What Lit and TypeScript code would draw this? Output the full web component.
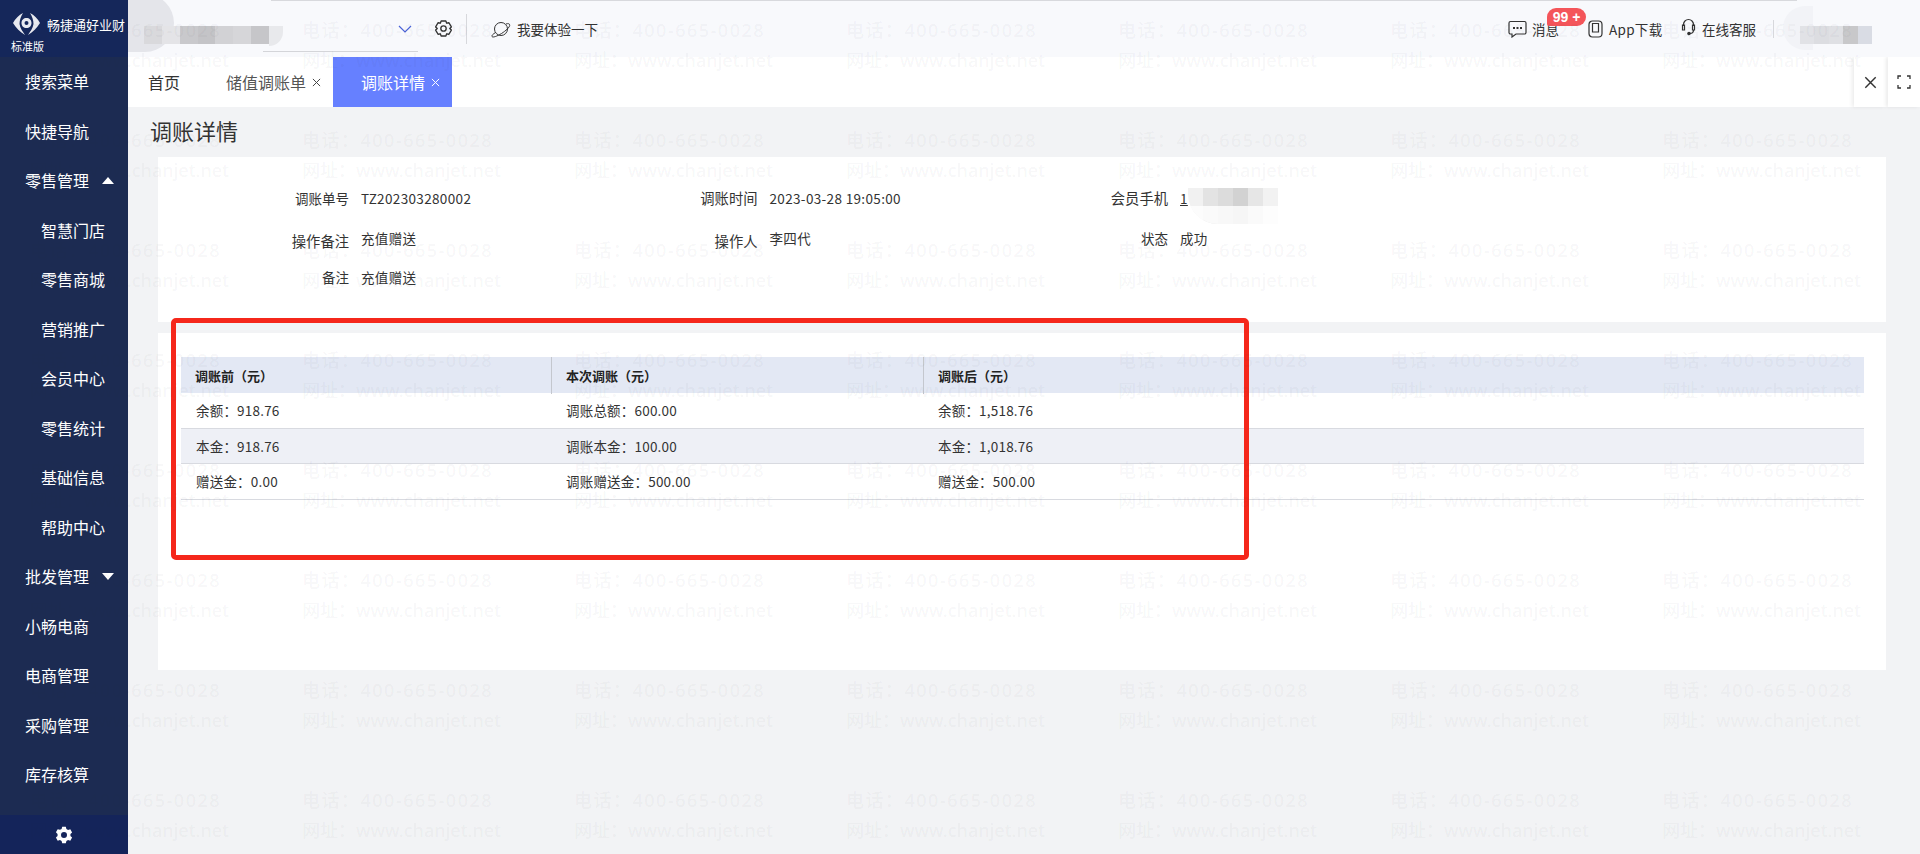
import {LitElement, html, css, svg} from 'lit';
import {customElement} from 'lit/decorators.js';

const menu = [
  {label: '搜索菜单'},
  {label: '快捷导航'},
  {label: '零售管理', arrow: 'up'},
  {label: '智慧门店', sub: true},
  {label: '零售商城', sub: true},
  {label: '营销推广', sub: true},
  {label: '会员中心', sub: true},
  {label: '零售统计', sub: true},
  {label: '基础信息', sub: true},
  {label: '帮助中心', sub: true},
  {label: '批发管理', arrow: 'down'},
  {label: '小畅电商'},
  {label: '电商管理'},
  {label: '采购管理'},
  {label: '库存核算'},
];

const fields = [
  {label: '调账单号', value: 'TZ202303280002'},
  {label: '调账时间', value: '2023-03-28 19:05:00', big: true},
  {label: '会员手机', value: '1', link: true, big: true},
  {label: '操作备注', value: '充值赠送', big: true, low: true},
  {label: '操作人', value: '李四代', big: true, low: true},
  {label: '状态', value: '成功'},
  {label: '备注', value: '充值赠送'},
];

const rows = [
  ['余额：918.76', '调账总额：600.00', '余额：1,518.76'],
  ['本金：918.76', '调账本金：100.00', '本金：1,018.76'],
  ['赠送金：0.00', '调账赠送金：500.00', '赠送金：500.00'],
];

const mosaicLeft = ['#d9d9dc', '#e4e4e7', '#c9c9cc', '#c4c4c7', '#d2d2d5', '#d6d6d9', '#c6c6c9'];
const mosaicRight = ['#e1e2e6', '#dcdde1', '#dfe0e4', '#c8c8ca', '#d9dce4'];
const mosaicPhone = ['#f1f1f1', '#e3e3e3', '#dcdcdc', '#d2d2d2', '#e6e6e6', '#f2f2f2'];

const gear = svg`<path d="M9 2.500h6l1 2.800 2.900-.6 3 5.300-2 2 2 2-3 5.300-2.900-.6-1 2.800H9l-1-2.800-2.900.6-3-5.300 2-2-2-2 3-5.300 2.900.6z" stroke-linejoin="round"/><circle cx="12" cy="12" r="3.400"/>`;

@customElement('app-root')
export class AppRoot extends LitElement {
  static styles = css`
    :host {
      display: block;
      position: relative;
      width: 100%;
      height: 854px;
      overflow: hidden;
      background: #f2f3f5;
      color: #333;
      font-family: 'Noto Sans CJK SC', 'Noto Sans', sans-serif;
      font-size: 13.5px;
    }
    .app {
      display: flex;
      height: 854px;
    }
    .side {
      width: 128px;
      flex: none;
      display: flex;
      flex-direction: column;
      background: #1c2b52;
      color: #fff;
    }
    .logo {
      height: 57px;
      flex: none;
      background: #15275a;
      box-sizing: border-box;
      padding: 13px 0 0 13px;
    }
    .logo-row {
      display: flex;
      align-items: center;
      gap: 7px;
      height: 22px;
      font-size: 13px;
      white-space: nowrap;
    }
    .edition {
      font-size: 11px;
      line-height: 14px;
      margin: 4px 0 0 -2px;
    }
    .menu {
      flex: 1;
    }
    .item {
      height: 49.5px;
      box-sizing: border-box;
      padding: 0 0 1px 25px;
      display: flex;
      align-items: center;
      font-size: 16px;
    }
    .item.sub {
      padding-left: 41px;
    }
    .tri {
      margin-left: 13px;
      width: 0;
      height: 0;
      border-left: 6px solid transparent;
      border-right: 6px solid transparent;
    }
    .tri.down {
      border-top: 7px solid #fff;
    }
    .tri.up {
      border-bottom: 7px solid #fff;
    }
    .side-foot {
      height: 39px;
      flex: none;
      background: #14245a;
      display: flex;
      align-items: center;
      justify-content: center;
    }
    .main {
      flex: 1;
      min-width: 0;
      display: flex;
      flex-direction: column;
    }
    .topbar {
      height: 57px;
      flex: none;
      display: flex;
      align-items: center;
      background: #f8f9fc;
      position: relative;
    }
    .topline {
      position: absolute;
      left: 143px;
      width: 1526px;
      top: 0;
      height: 1px;
      background: #d8d9dd;
    }
    .blob {
      position: absolute;
      left: 0;
      top: -6px;
      width: 46px;
      height: 58px;
      border-radius: 0 30px 30px 0;
      background: #e4e5ea;
    }
    .blob.tail {
      left: 141px;
      top: 26px;
      width: 14px;
      height: 20px;
      border-radius: 0 0 14px 0;
      background: #e8e9ec;
    }
    .blob.far {
      left: 1655px;
      top: 6px;
      width: 30px;
      height: 44px;
      border-radius: 22px 0 0 22px;
      background: #f2f3f7;
    }
    .underline {
      position: absolute;
      left: 135px;
      width: 155px;
      top: 51px;
      height: 1px;
      background: #d4d5d9;
    }
    .mosaic {
      display: flex;
      height: 18px;
      position: relative;
    }
    .mosaic i {
      display: block;
      flex: 1;
    }
    .account {
      margin-left: 16px;
      width: 125px;
      margin-top: 13px;
    }
    .chevron {
      margin-left: 129px;
    }
    .gear {
      margin-left: 22px;
    }
    .vline {
      width: 1px;
      background: #d7d8dc;
    }
    .vline.tall {
      height: 30px;
      margin-left: 13px;
    }
    .planet {
      margin-left: 24px;
    }
    .try {
      margin-left: 6px;
    }
    .right {
      margin-left: auto;
      display: flex;
      align-items: center;
      height: 100%;
    }
    .tool {
      display: flex;
      align-items: center;
      gap: 6px;
      position: relative;
      white-space: nowrap;
    }
    .tool.msg {
      gap: 5px;
    }
    .tool.app {
      margin-left: 29px;
    }
    .tool.help {
      margin-left: 18px;
    }
    .tool.help svg {
      margin-top: -4px;
    }
    .tool .fix {
      width: 54px;
      letter-spacing: 0.3px;
    }
    .badge {
      position: absolute;
      left: 39px;
      top: -11px;
      height: 18px;
      width: 39px;
      border-radius: 9px 9px 9px 2px;
      background: #f4555a;
      color: #fff;
      font-size: 14px;
      font-weight: 700;
      line-height: 18px;
      text-align: center;
      font-family: 'Liberation Sans', sans-serif;
    }
    .vline.short {
      height: 18px;
      margin-left: 17px;
    }
    .acc-right {
      width: 72px;
      margin-left: 26px;
      margin-right: 48px;
      margin-top: 13px;
    }
    .tabs {
      height: 50px;
      flex: none;
      display: flex;
      background: #fff;
      font-size: 16px;
      white-space: nowrap;
    }
    .tab {
      display: flex;
      align-items: center;
      gap: 6px;
    }
    .tab.home {
      margin-left: 20px;
      width: 78px;
    }
    .tab.store {
      width: 107px;
      color: #555;
    }
    .tab.on {
      width: 91px;
      padding-left: 28px;
      background: #6680ff;
      color: #fff;
    }
    .x {
      display: block;
      flex: none;
    }
    .tab-tools {
      margin-left: auto;
      display: flex;
      gap: 2px;
    }
    .tab-tools div {
      width: 32px;
      height: 50px;
      display: flex;
      align-items: center;
      justify-content: center;
      background: #fff;
      box-shadow: -2px 0 4px rgba(0, 0, 0, 0.08);
    }
    .title {
      height: 50px;
      flex: none;
      margin-left: 22px;
      font-size: 22px;
      line-height: 47px;
    }
    .card {
      background: #fff;
      margin: 0 34px 0 30px;
      flex: none;
    }
    .info {
      height: 165px;
      box-sizing: border-box;
      padding-top: 29px;
      position: relative;
      display: grid;
      grid-template-columns: 408.5px 410.5px 409px;
      grid-auto-rows: 39.5px;
    }
    .field {
      display: grid;
      grid-template-columns: 191px auto;
      column-gap: 12px;
      align-items: start;
      line-height: 24px;
    }
    .field .lab {
      text-align: right;
    }
    .field .lab.big {
      font-size: 14.3px;
    }
    .field .lab.low {
      margin-top: 3px;
    }
    .field .val {
      letter-spacing: 0.35px;
    }
    .link {
      text-decoration: underline;
    }
    .phone-blur {
      position: absolute;
      left: 1030px;
      top: 31px;
      width: 90px;
      height: 36px;
      display: flex;
      border-radius: 0 0 0 30px;
      overflow: hidden;
    }
    .phone-blur i {
      flex: 1;
    }
    .phone-blur::after {
      content: '';
      position: absolute;
      inset: 18px 0 0;
      background: rgba(255, 255, 255, 0.8);
    }
    .detail {
      margin-top: 11px;
      height: 337px;
      box-sizing: border-box;
      padding: 24px 22px 0 23px;
    }
    .thead,
    .tr {
      display: grid;
      grid-template-columns: 370px 372px 1fr;
    }
    .thead {
      height: 36px;
      background: #e3e8f4;
      font-weight: 600;
      font-size: 13px;
      color: #222;
    }
    .th {
      padding-left: 14px;
      line-height: 37px;
      border-left: 1px solid #c4c7ce;
    }
    .th:first-child {
      border-left: 0;
    }
    .tr {
      height: 35.5px;
      box-sizing: border-box;
      border-bottom: 1px solid #d8dae0;
      line-height: 34px;
    }
    .tr:nth-child(odd) {
      background: #eef0f6;
    }
    .td {
      padding-left: 15px;
      letter-spacing: 0.2px;
    }
    .mark {
      position: absolute;
      left: 171px;
      top: 318px;
      width: 1078px;
      height: 242px;
      box-sizing: border-box;
      border: 5px solid #f5271b;
      border-radius: 5px;
    }
    .water {
      position: absolute;
      inset: 0;
      padding: 15px 0 0 30px;
      overflow: hidden;
      pointer-events: none;
      display: grid;
      grid-template-columns: repeat(7, 272px);
      grid-auto-rows: 110px;
      color: rgba(50, 55, 70, 0.05);
      font-family: 'Noto Sans', 'Noto Sans CJK SC', sans-serif;
      font-size: 18px;
      font-weight: 500;
      line-height: 30px;
      white-space: nowrap;
    }
    .water .tel {
      letter-spacing: 1.5px;
    }
  `;

  icon(w: number, h: number, body: unknown, cls = '') {
    return html`<svg class=${cls} width=${w} height=${h} viewBox="0 0 ${w} ${h}" fill="none" stroke="#333" stroke-width="1.2">${body}</svg>`;
  }

  cross(size: number, color: string) {
    return html`<svg class="x" width=${size} height=${size} viewBox="0 0 10 10" fill="none" stroke=${color} stroke-width="1.1"><path d="M1 1l8 8M9 1l-8 8"/></svg>`;
  }

  mosaic(colors: string[], cls: string) {
    return html`<div class="mosaic ${cls}">${colors.map((c) => html`<i style="background:${c}"></i>`)}</div>`;
  }

  render() {
    const marks = Array.from({length: 56});
    return html`
      <div class="app">
        <aside class="side">
          <div class="logo">
            <div class="logo-row">
              <svg width="27" height="22" viewBox="0 0 27 22" fill="#e8eaf0">
                <path d="M10 0C6 2 2 6 0 10c3 5 7 9 12 12-2-3-5-7-5.500-11C6.500 7 8 3 10 0z"/>
                <path d="M17 0c4 2 8 6 10 10-3 5-7 9-12 12 2-3 5-7 5.500-11C20.500 7 19 3 17 0z"/>
                <path fill-rule="evenodd" d="M13.500 5c-2.800 0-5 2-5 5s2.200 5 5 5 5-2 5-5-2.200-5-5-5zm0 3a2 2 0 110 4 2 2 0 010-4z"/>
              </svg>
              <span>畅捷通好业财</span>
            </div>
            <div class="edition">标准版</div>
          </div>
          <div class="menu">
            ${menu.map(
              (m) => html`<div class="item ${m.sub ? 'sub' : ''}">
                ${m.label}${m.arrow ? html`<span class="tri ${m.arrow}"></span>` : ''}
              </div>`
            )}
          </div>
          <div class="side-foot">
            <svg width="18" height="18" viewBox="0 0 24 24" fill="#fff" fill-rule="evenodd">
              <path d="M9.600 1h4.800l.8 3 2.200 1.200 3-.8 2.400 4.200-2.200 2.200v2.400l2.200 2.200-2.400 4.200-3-.8-2.200 1.200-.8 3H9.600l-.8-3-2.200-1.200-3 .8-2.400-4.200 2.200-2.200v-2.400L1.200 8.400l2.400-4.200 3 .8L8.800 4zM12 8a4 4 0 100 8 4 4 0 000-8z"/>
            </svg>
          </div>
        </aside>
        <div class="main">
          <header class="topbar">
            <div class="blob"></div>
            <div class="blob tail"></div>
            <div class="blob far"></div>
            <div class="topline"></div>
            <div class="underline"></div>
            ${this.mosaic(mosaicLeft, 'account')}
            ${this.icon(14, 10, svg`<path d="M1 2l6 6 6-6" stroke="#4a63d8"/>`, 'chevron')}
            <svg class="gear" width="19" height="19" viewBox="0 0 24 24" fill="none" stroke="#333" stroke-width="1.700">${gear}</svg>
            <div class="vline tall"></div>
            ${this.icon(20, 18, svg`<circle cx="10" cy="9" r="6.500" stroke-width="1"/><path d="M4.500 12.500C2 14 .5 15.500 1 16.500c.8 1.300 5-.2 9.500-3 4.500-2.800 8-6.300 8.200-8C19 3.500 17 3.300 15 4" stroke-width="1"/>`, 'planet')}
            <span class="try">我要体验一下</span>
            <div class="right">
              <div class="tool msg">
                ${this.icon(19, 18, svg`<path d="M2.500 1.500h14a1.500 1.500 0 011.500 1.500v9.500a1.500 1.500 0 01-1.500 1.500H8l-4 3v-3H2.500A1.500 1.500 0 011 12.500V3a1.500 1.500 0 011.500-1.500z"/><path d="M5 8h2M8.500 8h2M12 8h2" stroke-width="1.800"/>`)}
                <span>消息</span>
                <span class="badge">99 +</span>
              </div>
              <div class="tool app">
                ${this.icon(15, 18, svg`<rect x="1" y="1" width="13" height="16" rx="3.500"/><path d="M4.500 3.500h6v8.500h-6z"/>`)}
                <span class="fix">App下载</span>
              </div>
              <div class="tool help">
                ${this.icon(15, 18, svg`<path d="M2.500 8V6.500a5 5 0 0110 0V8"/><path d="M1.500 7h2v5h-2zM11.500 7h2v5h-2z"/><path d="M12.500 12c0 2.500-1.500 3.500-3.500 3.500"/><circle cx="8" cy="15.500" r="1.200" fill="#333"/>`)}
                <span>在线客服</span>
              </div>
              <div class="vline short"></div>
              ${this.mosaic(mosaicRight, 'acc-right')}
            </div>
          </header>
          <nav class="tabs">
            <div class="tab home">首页</div>
            <div class="tab store">储值调账单 ${this.cross(9, '#444')}</div>
            <div class="tab on">调账详情 ${this.cross(9, '#fff')}</div>
            <div class="tab-tools">
              <div>${this.cross(13, '#333')}</div>
              <div>
                <svg width="14" height="14" viewBox="0 0 14 14" fill="none" stroke="#333" stroke-width="1.300">
                  <path d="M1 4V1h3M10 1h3v3M13 10v3h-3M4 13H1v-3"/>
                </svg>
              </div>
            </div>
          </nav>
          <div class="title">调账详情</div>
          <section class="card info">
            ${fields.map(
              (f) => html`<div class="field">
                <span class="lab ${f.big ? 'big' : ''} ${f.low ? 'low' : ''}">${f.label}</span>
                <span class="val ${f.link ? 'link' : ''}">${f.value}</span>
              </div>`
            )}
            <div class="phone-blur">${mosaicPhone.map((c) => html`<i style="background:${c}"></i>`)}</div>
          </section>
          <section class="card detail">
            <div class="thead">
              <div class="th">调账前（元）</div>
              <div class="th">本次调账（元）</div>
              <div class="th">调账后（元）</div>
            </div>
            ${rows.map(
              (r) => html`<div class="tr">${r.map((c) => html`<div class="td">${c}</div>`)}</div>`
            )}
          </section>
        </div>
      </div>
      <div class="mark"></div>
      <div class="water">
        ${marks.map(
          () => html`<div>
            <div class="tel">电话：400-665-0028</div>
            <div>网址：www.chanjet.net</div>
          </div>`
        )}
      </div>
    `;
  }
}
